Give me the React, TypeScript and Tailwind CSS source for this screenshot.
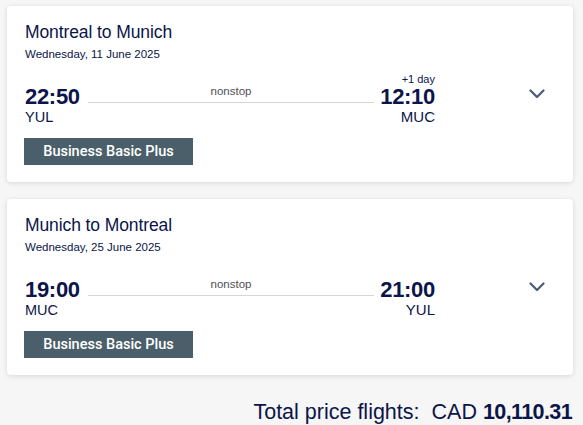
const navy = 'text-[#0b1549]';

interface Leg {
  title: string;
  date: string;
  depTime: string;
  depCode: string;
  arrTime: string;
  arrCode: string;
  dayShift?: string;
  fare: string;
}

const legs: Leg[] = [
  {
    title: 'Montreal to Munich',
    date: 'Wednesday, 11 June 2025',
    depTime: '22:50',
    depCode: 'YUL',
    arrTime: '12:10',
    arrCode: 'MUC',
    dayShift: '+1 day',
    fare: 'Business Basic Plus',
  },
  {
    title: 'Munich to Montreal',
    date: 'Wednesday, 25 June 2025',
    depTime: '19:00',
    depCode: 'MUC',
    arrTime: '21:00',
    arrCode: 'YUL',
    fare: 'Business Basic Plus',
  },
];

function Chevron() {
  return (
    <svg width="16" height="10" viewBox="0 0 16 10" fill="none">
      <path d="M1.5 1.5 L8 8 L14.5 1.5" stroke="#4b5b78" strokeWidth="2.2" strokeLinecap="round" strokeLinejoin="round" />
    </svg>
  );
}

function LegCard({ leg }: { leg: Leg }) {
  return (
    <div className="bg-white rounded-[4px] shadow-[0_1px_5px_rgba(0,0,0,0.13)] px-[18px] pt-[14px] pb-[17px]">
      <div className={`text-[17.5px] leading-[24px] tracking-[-0.1px] ${navy}`}>{leg.title}</div>
      <div className={`mt-[2px] text-[11.5px] leading-[16px] ${navy}`}>{leg.date}</div>

      <div className="mt-[11px] flex">
        {/* departure */}
        <div className="flex-none">
          <div className="h-[12px]" />
          <div className={`text-[22px] leading-[24px] font-bold tracking-[-0.3px] ${navy}`}>{leg.depTime}</div>
          <div className={`text-[14.5px] leading-[16px] ${navy}`}>{leg.depCode}</div>
        </div>

        {/* duration line */}
        <div className="flex-1 ml-[8px] mr-[6px] pt-[11px]">
          <div className="text-center text-[11.5px] leading-[14px] text-[#4f4f55]">nonstop</div>
          <div className="mt-[4px] border-t border-[#d6d6d6]" />
        </div>

        {/* arrival */}
        <div className="flex-none text-right">
          <div className={`h-[12px] text-[11px] leading-[12px] ${navy}`}>{leg.dayShift}</div>
          <div className={`text-[22px] leading-[24px] font-bold tracking-[-0.3px] ${navy}`}>{leg.arrTime}</div>
          <div className={`text-[15px] leading-[16px] ${navy}`}>{leg.arrCode}</div>
        </div>

        <div className="w-[120px] flex justify-end pr-[10px] pt-[16px]">
          <Chevron />
        </div>
      </div>

      <div className="mt-[13px] -ml-[1px] w-[169px] h-[27px] bg-[#4a5f6a] flex items-center justify-center text-white text-[14.5px] font-medium font-['Roboto',sans-serif]">
        {leg.fare}
      </div>
    </div>
  );
}

export default function App() {
  return (
    <div className="min-h-[425px] bg-[#f6f6f6] font-['Liberation_Sans',Arial,sans-serif] pt-[6px]">
      <div className="ml-[7px] w-[566px]">
        {legs.map((leg, i) => (
          <div key={leg.title} className={i > 0 ? 'mt-[17px]' : ''}>
            <LegCard leg={leg} />
          </div>
        ))}

        <div className={`mt-[25px] flex justify-end items-baseline pr-[1px] text-[21.5px] leading-[24px] ${navy}`}>
          <span>Total price flights:</span>
          <span className="ml-[12px]">CAD</span>
          <span className="ml-[6px] font-bold tracking-[-0.6px]">10,110.31</span>
        </div>
      </div>
    </div>
  );
}
